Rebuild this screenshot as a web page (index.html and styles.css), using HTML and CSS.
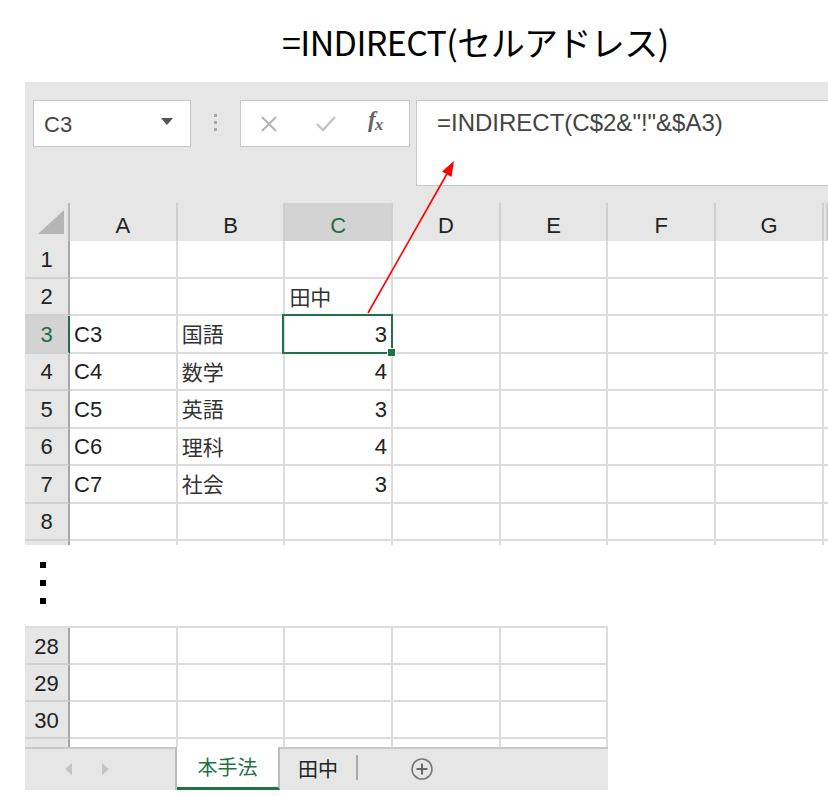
FILE: index.html
```html
<!DOCTYPE html>
<html lang="ja">
<head>
<meta charset="utf-8">
<title>INDIRECT</title>
<link rel="stylesheet" href="styles.css">
</head>
<body>
<div class="page">
  <h1 class="title">=INDIRECT(セルアドレス)</h1>

  <div class="excel">
    <div class="fbar">
      <div class="namebox">
        <span>C3</span>
        <svg class="dd" width="12" height="7" viewBox="0 0 12 7"><path d="M0 0H12L6 7Z" fill="#555"/></svg>
      </div>
      <div class="vdots"><i></i><i></i><i></i></div>
      <div class="fnbox">
        <svg class="ico-x" width="18" height="18" viewBox="0 0 18 18"><path d="M2 2L16 16M16 2L2 16" stroke="#b3b3b3" stroke-width="2"/></svg>
        <svg class="ico-ok" width="22" height="18" viewBox="0 0 22 18"><path d="M2 9L8 15L20 2" fill="none" stroke="#c4c4c4" stroke-width="2.4"/></svg>
        <span class="fx">f<sub>x</sub></span>
      </div>
      <div class="formula">=INDIRECT(C$2&amp;"!"&amp;$A3)</div>
    </div>

    <div class="sheet top">
      <div class="row head">
        <div class="corner"><svg width="44" height="37" viewBox="0 0 44 37"><path d="M39 7V31H13Z" fill="#b5b5b5"/></svg></div>
        <div class="ch">A</div><div class="ch">B</div><div class="ch cur">C</div><div class="ch">D</div><div class="ch">E</div><div class="ch">F</div><div class="ch">G</div><div class="ch"></div>
      </div>
      <div class="row"><div class="rh">1</div><div class="c"></div><div class="c"></div><div class="c"></div><div class="c"></div><div class="c"></div><div class="c"></div><div class="c"></div><div class="c"></div></div>
      <div class="row"><div class="rh">2</div><div class="c"></div><div class="c"></div><div class="c jp">田中</div><div class="c"></div><div class="c"></div><div class="c"></div><div class="c"></div><div class="c"></div></div>
      <div class="row"><div class="rh cur">3</div><div class="c">C3</div><div class="c jp">国語</div><div class="c num sel">3</div><div class="c"></div><div class="c"></div><div class="c"></div><div class="c"></div><div class="c"></div></div>
      <div class="row"><div class="rh">4</div><div class="c">C4</div><div class="c jp">数学</div><div class="c num">4</div><div class="c"></div><div class="c"></div><div class="c"></div><div class="c"></div><div class="c"></div></div>
      <div class="row"><div class="rh">5</div><div class="c">C5</div><div class="c jp">英語</div><div class="c num">3</div><div class="c"></div><div class="c"></div><div class="c"></div><div class="c"></div><div class="c"></div></div>
      <div class="row"><div class="rh">6</div><div class="c">C6</div><div class="c jp">理科</div><div class="c num">4</div><div class="c"></div><div class="c"></div><div class="c"></div><div class="c"></div><div class="c"></div></div>
      <div class="row"><div class="rh">7</div><div class="c">C7</div><div class="c jp">社会</div><div class="c num">3</div><div class="c"></div><div class="c"></div><div class="c"></div><div class="c"></div><div class="c"></div></div>
      <div class="row"><div class="rh">8</div><div class="c"></div><div class="c"></div><div class="c"></div><div class="c"></div><div class="c"></div><div class="c"></div><div class="c"></div><div class="c"></div></div>
      <div class="row"><div class="rh"></div><div class="c"></div><div class="c"></div><div class="c"></div><div class="c"></div><div class="c"></div><div class="c"></div><div class="c"></div><div class="c"></div></div>
    </div>
  </div>

  <div class="gap"><i></i><i></i><i></i></div>

  <div class="bottom">
    <div class="sheet low">
      <div class="row"><div class="rh">28</div><div class="c"></div><div class="c"></div><div class="c"></div><div class="c"></div><div class="c"></div></div>
      <div class="row"><div class="rh">29</div><div class="c"></div><div class="c"></div><div class="c"></div><div class="c"></div><div class="c"></div></div>
      <div class="row"><div class="rh">30</div><div class="c"></div><div class="c"></div><div class="c"></div><div class="c"></div><div class="c"></div></div>
      <div class="row"><div class="rh">31</div><div class="c"></div><div class="c"></div><div class="c"></div><div class="c"></div><div class="c"></div></div>
    </div>
    <div class="tabbar">
      <div class="nav">
        <svg width="8" height="12" viewBox="0 0 8 12"><path d="M7 0V12L0 6Z" fill="#c4c4c4"/></svg>
        <svg width="8" height="12" viewBox="0 0 8 12"><path d="M1 0V12L8 6Z" fill="#c4c4c4"/></svg>
      </div>
      <div class="tab active">本手法</div>
      <div class="tab">田中</div>
      <div class="tsep"></div>
      <svg class="add" width="24" height="24" viewBox="0 0 24 24"><circle cx="12" cy="12" r="10" fill="none" stroke="#777" stroke-width="1.6"/><path d="M12 6.5V17.5M6.5 12H17.5" stroke="#666" stroke-width="2"/></svg>
    </div>
  </div>

  <svg class="arrow" width="828" height="796" viewBox="0 0 828 796">
    <line x1="368" y1="313" x2="448" y2="172" stroke="#ff0000" stroke-width="1.6"/>
    <path d="M454 161L451.5 177L442 171.5Z" fill="#ff0000"/>
  </svg>
</div>
</body>
</html>
```

FILE: styles.css
```css
* { box-sizing: border-box; }
html, body { margin: 0; padding: 0; background: #fff; }
body { font-family: "Liberation Sans", "Noto Sans CJK JP", sans-serif; color: #222; }

.page { position: relative; width: 828px; height: 796px; overflow: hidden; }

.title {
  margin: 0;
  height: 82px;
  padding: 18px 0 0 282px;
  font-family: "Noto Sans CJK JP", sans-serif;
  font-weight: 400;
  font-size: 34px;
  line-height: 48px;
  letter-spacing: -0.6px;
  color: #000;
  white-space: nowrap;
}

.excel {
  margin-left: 25px;
  width: 803px;
  background: #e6e6e6;
  overflow: hidden;
}

.fbar {
  display: flex;
  align-items: flex-start;
  height: 121px;
  padding: 18px 0 0 8px;
}
.namebox {
  width: 158px;
  height: 47px;
  background: #fff;
  border: 1px solid #c6c6c6;
  display: flex;
  align-items: center;
  justify-content: space-between;
  padding: 2px 17px 0 10px;
  font-size: 22px;
  color: #444;
}
.namebox .dd { margin-top: -6px; }
.vdots {
  width: 49px;
  display: flex;
  flex-direction: column;
  align-items: center;
  gap: 4px;
  padding-top: 14px;
}
.vdots i { width: 3px; height: 3px; background: #a8a8a8; display: block; }
.fnbox {
  width: 170px;
  height: 47px;
  background: #fff;
  border: 1px solid #c6c6c6;
  display: flex;
  align-items: center;
  padding: 0 0 0 19px;
}
.ico-ok { margin-left: 37px; }
.fx {
  margin-left: 31px;
  font-family: "Liberation Serif", serif;
  font-style: italic;
  font-weight: bold;
  font-size: 23px;
  color: #666;
  margin-top: -6px;
  letter-spacing: -1px;
}
.fx sub { font-size: 17px; vertical-align: -3px; }
.formula {
  margin-left: 6px;
  flex: 1;
  height: 86px;
  background: #fff;
  border: 1px solid #c6c6c6;
  border-right: none;
  padding: 6px 0 0 20px;
  font-size: 24px;
  line-height: 32px;
  color: #444;
  white-space: nowrap;
}

/* grid */
.sheet { font-size: 22px; color: #222; }
.sheet.top { height: 342px; overflow: hidden; }
.row {
  display: grid;
  grid-template-columns: 45px repeat(7, 107.7px) 1fr;
  height: 37.5px;
}
.row.head { height: 38px; }
.corner, .ch {
  background: #e6e6e6;
  border-bottom: 2px solid #a6a6a6;
}
.corner { border-right: 2px solid #b8b8b8; }
.ch {
  border-right: 2px solid #cfcfcf;
  display: flex;
  align-items: center;
  justify-content: center;
  padding-top: 2px;
  color: #222;
}
.ch.cur { background: #d3d3d3; color: #1f6e44; border-bottom-color: #217346; }
.rh {
  background: #e6e6e6;
  border-right: 2px solid #a6a6a6;
  border-bottom: 2px solid #d0d0d0;
  display: flex;
  align-items: center;
  justify-content: center;
  padding-top: 2px;
}
.rh.cur { background: #d3d3d3; color: #1f6e44; border-right-color: #217346; }
.c {
  background: #fff;
  border-right: 2px solid #dcdcdc;
  border-bottom: 2px solid #dcdcdc;
  display: flex;
  align-items: center;
  padding: 2px 0 0 4px;
  white-space: nowrap;
}
.c.jp {
  font-family: "Noto Sans CJK JP", sans-serif;
  font-size: 21px;
  line-height: 1;
  padding-top: 0;
  color: #333;
}
.c.num { justify-content: flex-end; padding-right: 4px; }
.c.sel { position: relative; }
.c.sel::after {
  content: "";
  position: absolute;
  left: -3px; top: -2px; right: -2px; bottom: -2px;
  border: 2px solid #217346;
}
.c.sel::before {
  content: "";
  position: absolute;
  right: -5px; bottom: -5px;
  width: 7px; height: 7px;
  background: #217346;
  border: 1px solid #fff;
  z-index: 1;
}

.gap {
  height: 81px;
  display: flex;
  flex-direction: column;
  gap: 12px;
  padding: 17px 0 0 40px;
}
.gap i { display: block; width: 6px; height: 6px; background: #000; }

.bottom { margin-left: 25px; width: 583px; }
.sheet.low {
  height: 121px;
  overflow: hidden;
  border-top: 2px solid #dcdcdc;
}
.sheet.low .row { grid-template-columns: 45px repeat(5, 107.7px); height: 37px; }
.tabbar {
  height: 43px;
  background: #e6e6e6;
  border-top: 2px solid #c8c8c8;
  display: flex;
  align-items: stretch;
  font-family: "Noto Sans CJK JP", sans-serif;
  font-size: 20px;
}
.nav {
  width: 152px;
  display: flex;
  align-items: center;
  gap: 28px;
  padding-left: 40px;
  border-right: 2px solid #bcbcbc;
  margin-top: -2px;
}
.tab {
  display: flex;
  align-items: center;
  justify-content: center;
  padding-bottom: 2px;
}
.tab.active {
  width: 103px;
  background: #fff;
  color: #1e7145;
  margin-top: -2px;
  border-bottom: 3px solid #217346;
  border-right: 2px solid #bcbcbc;
}
.tab:not(.active) { width: 76px; color: #222; }
.tsep { width: 2px; background: #a8a8a8; margin: 6px 0 10px; }
.add { align-self: center; margin-left: 52px; margin-top: -2px; }

.arrow { position: absolute; left: 0; top: 0; pointer-events: none; }
```
